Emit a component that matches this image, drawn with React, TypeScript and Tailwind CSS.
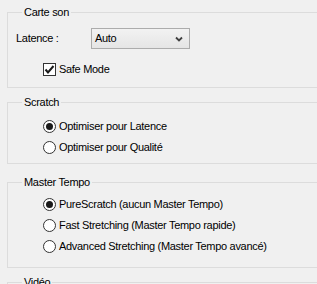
import React, { useState } from 'react';

const font = { fontFamily: '"Liberation Sans", Arial, sans-serif' };

const Group = ({ title, className = '', children }: { title: string; className?: string; children?: React.ReactNode }) => (
  <fieldset className={`ml-[7px] mr-[-20px] border border-[#dcdcdc] pl-[8px] ${className}`}>
    <legend className="ml-[6px] px-[2px] h-[13px] leading-[13px]">{title}</legend>
    {children}
  </fieldset>
);

const Radio = ({ checked, label, onClick }: { checked: boolean; label: string; onClick: () => void }) => (
  <div className="flex items-center h-[13px] ml-[27px] cursor-default" onClick={onClick}>
    <span className="w-[13px] h-[13px] rounded-full border border-[#333333] bg-white flex items-center justify-center shrink-0">
      {checked && <span className="w-[7px] h-[7px] rounded-full bg-[#1a1a1a]" />}
    </span>
    <span className="ml-[3px] whitespace-nowrap leading-[13px]">{label}</span>
  </div>
);

export default function App() {
  const [safe, setSafe] = useState(true);
  const [scratch, setScratch] = useState(0);
  const [tempo, setTempo] = useState(0);

  return (
    <div className="w-[317px] h-[284px] overflow-hidden bg-[#f0f0f0] text-[11px] tracking-[-0.3px] text-black" style={font}>
      <div className="pt-[6px]">
        {/* Carte son */}
        <Group title="Carte son">
          <div className="pt-[9px] flex items-center h-[30px]">
            <span className="w-[75px]">Latence :</span>
            <div className="w-[99px] h-[21px] border border-[#acacac] bg-gradient-to-b from-[#f2f2f2] to-[#e5e5e5] flex items-center justify-between pl-[3px] pr-[6px]">
              <span>Auto</span>
              <svg width="8" height="6" viewBox="0 0 8 6">
                <path d="M1 1.5 L4 4.5 L7 1.5" fill="none" stroke="#404040" strokeWidth="1.8" />
              </svg>
            </div>
          </div>
          <div className="mt-[14px] mb-[11px] flex items-center h-[13px] ml-[27px]" onClick={() => setSafe(!safe)}>
            <span className="w-[13px] h-[13px] border border-[#333333] bg-white flex items-center justify-center shrink-0">
              {safe && (
                <svg width="11" height="11" viewBox="0 0 11 11">
                  <path d="M1.5 5.5 L4 8.5 L9.5 2" fill="none" stroke="#1a1a1a" strokeWidth="2" />
                </svg>
              )}
            </span>
            <span className="ml-[3px] leading-[13px]">Safe Mode</span>
          </div>
        </Group>

        {/* Scratch */}
        <Group title="Scratch" className="mt-[8px]">
          <div className="pt-[11px] pb-[9px] flex flex-col gap-[8px]">
            <Radio checked={scratch === 0} label="Optimiser pour Latence" onClick={() => setScratch(0)} />
            <Radio checked={scratch === 1} label="Optimiser pour Qualité" onClick={() => setScratch(1)} />
          </div>
        </Group>

        {/* Master Tempo */}
        <Group title="Master Tempo" className="mt-[12px]">
          <div className="pt-[9px] pb-[14px] flex flex-col gap-[8px]">
            <Radio checked={tempo === 0} label="PureScratch (aucun Master Tempo)" onClick={() => setTempo(0)} />
            <Radio checked={tempo === 1} label="Fast Stretching (Master Tempo rapide)" onClick={() => setTempo(1)} />
            <Radio checked={tempo === 2} label="Advanced Stretching (Master Tempo avancé)" onClick={() => setTempo(2)} />
          </div>
        </Group>

        <Group title="Vidéo" className="mt-[8px] h-[40px]" />
      </div>
    </div>
  );
}
